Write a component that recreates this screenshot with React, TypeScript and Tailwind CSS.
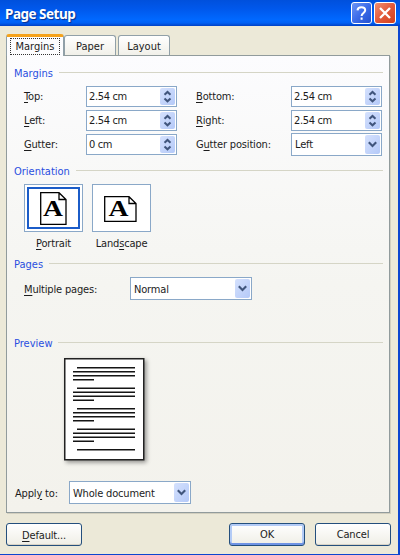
import type { ReactNode } from 'react';

function Accel({ text, at }: { text: string; at: number }) {
  return (
    <span className="relative top-px whitespace-pre">
      {text.slice(0, at)}
      <span className="underline underline-offset-2 decoration-1">{text[at]}</span>
      {text.slice(at + 1)}
    </span>
  );
}

function Heading({ children }: { children: ReactNode }) {
  return (
    <div className="flex h-4 items-center pr-[6px] pl-[7px] text-[#2a4fe0]">
      <span className="relative top-px tracking-normal">{children}</span>
      <div className="mb-[2px] ml-[6px] h-px flex-1 bg-[#d5d5c6]" />
    </div>
  );
}

function Spinner({ value }: { value: string }) {
  return (
    <div className="flex h-[21px] w-[91px] items-center border border-[#8aa8c8] bg-white pr-px pl-[2px]">
      <span className="relative top-px flex-1 tracking-[-0.35px]">{value}</span>
      <div className="flex h-[17px] w-[15px] items-center justify-center rounded-[2px] bg-gradient-to-br from-[#d5e1fd] to-[#b4c9f8]">
        <svg width="9" height="13" viewBox="0 0 9 13" fill="none" stroke="#40557c" strokeWidth="2">
          <path d="M1.5 4.7 4.5 1.9 7.5 4.7M1.5 8.5 4.5 11.3 7.5 8.5" />
        </svg>
      </div>
    </div>
  );
}

function Combo({ value, className }: { value: string; className: string }) {
  return (
    <div className={`flex items-center border border-[#8aa8c8] bg-white pr-px pl-[3px] ${className}`}>
      <span className="relative top-px flex-1 whitespace-nowrap">{value}</span>
      <div className="flex h-[19px] w-[15px] items-center justify-center rounded-[2px] bg-gradient-to-br from-[#d5e1fd] to-[#b4c9f8]">
        <svg width="9" height="7" viewBox="0 0 9 7" fill="none" stroke="#40557c" strokeWidth="2.1">
          <path d="M.8 1.2 4.5 4.9 8.2 1.2" />
        </svg>
      </div>
    </div>
  );
}

function Button({ children, primary }: { children: ReactNode; primary?: boolean }) {
  return (
    <div
      className={`flex h-[23px] w-[76px] items-center justify-center rounded-[3px] border border-[#244f7d] bg-gradient-to-b from-white to-[#efeee6] ${
        primary ? 'shadow-[inset_0_-2px_0_#6f93e4,inset_0_0_0_2px_#b3cbf6]' : 'shadow-[inset_0_-1px_0_#d8d3c6]'
      }`}
    >
      {children}
    </div>
  );
}

const tab =
  'flex h-[20px] items-center justify-center rounded-t-[3px] border border-b-0 border-[#91a0a8] bg-gradient-to-b from-white to-[#f1f0e9] pt-[2px] tracking-normal';

// line offsets inside the preview page, [x, y, width]
const previewLines = [0, 1, 2, 3].flatMap((i) => {
  const y = 9 + i * 20.5;
  return [
    [13, y, 58],
    [9, y + 4, 62],
    [9, y + 8, 62],
    [9, y + 12, 21],
  ];
});
previewLines.push([13, 91, 58]);

export default function App() {
  return (
    <div className="flex h-[555px] w-[400px] flex-col overflow-hidden bg-[#ece9d8] font-['DejaVu_Sans_Condensed','DejaVu_Sans',sans-serif] text-[11px] leading-[16px] font-normal tracking-[-0.17px] text-[#1c1c1c] [font-stretch:condensed]">
      <div className="flex h-[26px] shrink-0 items-center justify-between bg-[linear-gradient(#0050dc_0%,#0058ec_35%,#0068ff_75%,#0060f4_88%,#0040c4_100%)] pr-[4px] pl-[5px]">
        <span className="relative top-px font-['Noto_Sans',sans-serif] text-[13.5px] font-bold tracking-[-0.5px] text-white [text-shadow:1px_1px_1px_#0a2f8c]">
          Page Setup
        </span>
        <div className="flex gap-[2px]">
          <div className="flex h-[22px] w-[21px] items-center justify-center rounded-[3px] border border-white bg-gradient-to-br from-[#6d94f5] via-[#3c6ce9] to-[#2350cf]">
            <svg width="13" height="15" viewBox="0 0 13 15" fill="none" stroke="white" strokeWidth="2">
              <path d="M2.5 4.3C2.7 2 4.2 1.3 6.4 1.3c2.3 0 3.8 1.1 3.8 3 0 2.5-3.6 2.8-3.6 5.6M6.6 11.6v2.2" />
            </svg>
          </div>
          <div className="flex h-[22px] w-[22px] items-center justify-center rounded-[3px] border border-white bg-gradient-to-br from-[#f08e70] via-[#e2593a] to-[#d2401a]">
            <svg width="14" height="14" viewBox="0 0 14 14" fill="none" stroke="white" strokeWidth="2.3">
              <path d="M2 2 12 12M12 2 2 12" />
            </svg>
          </div>
        </div>
      </div>

      <div className="flex flex-1 flex-col border-r-2 border-b border-[#0c46d0] pr-[8px] pl-[6px]">
        <div className="relative z-10 -mb-px flex h-[30px] items-end">
          <div className="flex h-[22px] w-[58px] items-center justify-center rounded-t-[3px] border border-t-[3px] border-b-0 border-[#91a0a8] border-t-[#f5a21b] bg-[#fcfcfe]">
            <span className="flex h-[17px] w-[50px] items-center justify-center border border-dotted border-[#333] tracking-normal">
              Margins
            </span>
          </div>
          <div className={`${tab} mb-px w-[52px]`}>Paper</div>
          <div className={`${tab} mb-px ml-[2px] w-[52px]`}>Layout</div>
        </div>

        <div className="h-[458px] w-[384px] border border-[#919b9c] bg-gradient-to-b from-[#fcfcfe] via-[#f5f5f1] via-50% to-[#f3f2ec] pt-[9px] shadow-[1px_1px_0_#d2cfbf]">
          <Heading>Margins</Heading>
          <div className="mt-[3px] ml-[17px] grid grid-cols-[62px_110px_95px_91px] grid-rows-[24px_24px_24px] items-center">
            <Accel text="Top:" at={0} />
            <Spinner value="2.54 cm" />
            <Accel text="Bottom:" at={0} />
            <Spinner value="2.54 cm" />
            <Accel text="Left:" at={0} />
            <Spinner value="2.54 cm" />
            <Accel text="Right:" at={0} />
            <Spinner value="2.54 cm" />
            <Accel text="Gutter:" at={0} />
            <Spinner value="0 cm" />
            <Accel text="Gutter position:" at={1} />
            <Combo value="Left" className="h-[23px] w-[91px]" />
          </div>

          <div className="mt-[7px]">
            <Heading>Orientation</Heading>
          </div>
          <div className="mt-[5px] ml-[17px] flex gap-[9px]">
            <div className="flex w-[59px] flex-col items-center">
              <div className="h-[48px] w-[59px] border border-[#8aa8c8] bg-white p-[2px]">
                <div className="flex h-full items-center justify-center border-2 border-[#1b5cc8]">
                  <svg width="27" height="33" viewBox="0 0 27 33">
                    <path d="M.7.7H19L26 7.5V32.3H.7ZM19 .7V7.5H26" fill="white" stroke="black" strokeWidth="1.3" />
                    <text x="3" y="23.5" textLength="20" lengthAdjust="spacingAndGlyphs" letterSpacing="0" fontSize="24" fontWeight="bold" fontFamily="Liberation Serif, serif">A</text>
                  </svg>
                </div>
              </div>
              <div className="mt-[3px]">
                <Accel text="Portrait" at={0} />
              </div>
            </div>
            <div className="flex w-[59px] flex-col items-center">
              <div className="flex h-[48px] w-[59px] items-center justify-center border border-[#8aa8c8] bg-white">
                <svg width="33" height="27" viewBox="0 0 33 27" className="mt-[3px] mr-[2px]">
                  <path d="M.7 .7H25L32 7.5V25.3H.7ZM25 .7V7.5H32" fill="white" stroke="black" strokeWidth="1.3" />
                  <text x="4.5" y="20" textLength="20" lengthAdjust="spacingAndGlyphs" letterSpacing="0" fontSize="24" fontWeight="bold" fontFamily="Liberation Serif, serif">A</text>
                </svg>
              </div>
              <div className="mt-[3px]">
                <Accel text="Landscape" at={4} />
              </div>
            </div>
          </div>

          <div className="mt-[5px]">
            <Heading>Pages</Heading>
          </div>
          <div className="mt-[5px] ml-[17px] flex items-center">
            <div className="w-[106px]">
              <Accel text="Multiple pages:" at={0} />
            </div>
            <Combo value="Normal" className="h-[23px] w-[122px]" />
          </div>

          <div className="mt-[35px]">
            <Heading>Preview</Heading>
          </div>
          <svg width="88" height="108" viewBox="0 0 88 108" className="mt-[7px] ml-[57px] drop-shadow-[2px_2px_2px_#00000066]">
            <rect x=".75" y=".75" width="79" height="101" fill="white" stroke="#222" strokeWidth="1.5" />
            {previewLines.map(([x, y, w]) => (
              <rect key={`${x}-${y}`} x={x} y={y} width={w} height="1.5" fill="#151515" />
            ))}
          </svg>

          <div className="mt-[15px] ml-[8px] flex items-center">
            <div className="w-[54px]">
              <Accel text="Apply to:" at={4} />
            </div>
            <Combo value="Whole document" className="h-[23px] w-[122px]" />
          </div>
        </div>

        <div className="mt-[10px] flex">
          <Button>
            <Accel text="Default..." at={0} />
          </Button>
          <div className="-mr-px ml-auto flex gap-[10px]">
            <Button primary>OK</Button>
            <Button>Cancel</Button>
          </div>
        </div>
      </div>
    </div>
  );
}
